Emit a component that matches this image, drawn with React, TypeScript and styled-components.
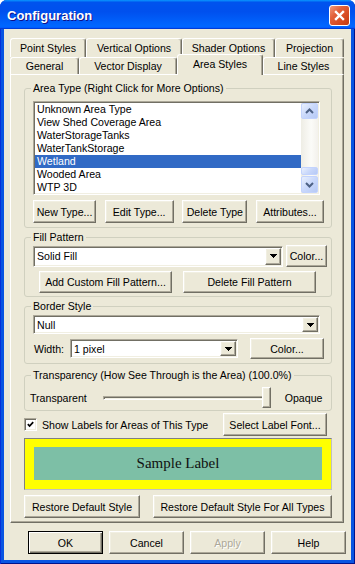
import React from "react";
import styled, { createGlobalStyle, css } from "styled-components";

const GlobalStyle = createGlobalStyle`
  html, body { margin: 0; padding: 0; background: #fff; }
  body {
    font-family: "Liberation Sans", Arial, sans-serif;
    font-size: 10.6px;
    color: #000;
  }
  * { box-sizing: border-box; }
`;

const FACE = "#ECE9D8";

const raised = css`
  border: 1px solid;
  border-color: #fff #716f64 #716f64 #fff;
  box-shadow: inset -1px -1px #aca899, inset 1px 1px #f1efe2;
`;

const sunken = css`
  border: 1px solid;
  border-color: #aca899 #fff #fff #aca899;
  box-shadow: inset 1px 1px #716f64, inset -1px -1px #f1efe2;
`;

const Window = styled.div`
  width: 355px;
  height: 564px;
  display: flex;
  flex-direction: column;
  background: #0a55e2;
  border-radius: 7px 7px 0 0;
  overflow: hidden;
  box-shadow: inset 1px 0 #0831d9, inset -1px -1px #00138c;
`;

const TitleBar = styled.div`
  height: 29px;
  flex-shrink: 0;
  display: flex;
  align-items: center;
  justify-content: space-between;
  padding: 2px 5px 0 7px;
  background: linear-gradient(180deg, #0997ff, #0053ee 8%, #0050ee 40%, #06f 88%, #06f 93%, #005bff 95%, #003dd7 96%, #003dd7);
`;

const Title = styled.span`
  color: #fff;
  font-weight: bold;
  font-size: 13px;
  text-shadow: 1px 1px #0f1089;
`;

const CloseButton = styled.div`
  width: 21px;
  height: 21px;
  border: 1px solid #fff;
  border-radius: 3px;
  background: linear-gradient(135deg, #f09a7c 0%, #e2603a 35%, #d64a20 70%, #c23c12 100%);
  display: flex;
  align-items: center;
  justify-content: center;
`;

const Client = styled.div`
  flex: 1;
  margin: 0 4px 4px;
  background: ${FACE};
  padding: 9px 7px 6px 6px;
  display: flex;
  flex-direction: column;
`;

const TabRow = styled.div<{ $h: number }>`
  display: flex;
  height: ${(p) => p.$h}px;
  flex-shrink: 0;
`;

const Tab = styled.div<{ $w: number; $active?: boolean }>`
  width: ${(p) => p.$w}px;
  flex-shrink: 0;
  display: flex;
  align-items: center;
  justify-content: center;
  white-space: nowrap;
  background: ${FACE};
  border: 1px solid;
  border-bottom: none;
  border-color: #fff #716f64 transparent #fff;
  box-shadow: inset -1px 0 #aca899;
  border-radius: 3px 3px 0 0;
  ${(p) =>
    p.$active &&
    css`
      position: relative;
      z-index: 2;
      margin-top: -3px;
      height: 21px;
      padding-bottom: 3px;
    `}
`;

const Panel = styled.div`
  height: 449px;
  flex-shrink: 0;
  border: 1px solid;
  border-color: #fff #716f64 #716f64 #fff;
  box-shadow: inset -1px -1px #aca899;
  padding: 7px 11px 0 13px;
  display: flex;
  flex-direction: column;
`;

const Group = styled.fieldset<{ $mt?: number; $pt: number; $pb: number }>`
  margin: ${(p) => p.$mt ?? 0}px 0 0;
  padding: ${(p) => p.$pt}px 4px ${(p) => p.$pb}px 8px;
  border: 1px solid #d0d0bf;
  border-radius: 3px;
  min-width: 0;
`;

const Legend = styled.legend`
  padding: 0 2px;
  margin-left: -2px;
  line-height: 13px;
`;

const ListBox = styled.div`
  width: 287px;
  height: 94px;
  display: flex;
  background: #fff;
  padding: 1px;
  ${sunken}
`;

const Items = styled.div`
  flex: 1;
  display: flex;
  flex-direction: column;
`;

const Item = styled.div<{ $selected?: boolean }>`
  height: 13px;
  line-height: 13px;
  padding-left: 2px;
  white-space: nowrap;
  background: ${(p) => (p.$selected ? "#316ac5" : "transparent")};
  color: ${(p) => (p.$selected ? "#fff" : "#000")};
`;

const ScrollBar = styled.div`
  width: 17px;
  display: flex;
  flex-direction: column;
  background: linear-gradient(90deg, #eeede5, #fbfbf8 60%, #f3f1ec);
`;

const ScrollBtn = styled.div<{ $h: number }>`
  height: ${(p) => p.$h}px;
  flex-shrink: 0;
  border: 1px solid #c3d3fd;
  border-radius: 2px;
  background: linear-gradient(135deg, #e9f0fd 0%, #c9d8fb 50%, #b6c9f5 100%);
  display: flex;
  align-items: center;
  justify-content: center;
`;

const Track = styled.div`
  flex: 1;
  display: flex;
  flex-direction: column;
`;

const Thumb = styled(ScrollBtn)`
  margin-top: auto;
  margin-bottom: 1px;
`;

const Row = styled.div<{ $mt?: number; $gap?: number; $w?: number; $spread?: boolean; $pl?: number }>`
  display: flex;
  align-items: center;
  margin-top: ${(p) => p.$mt ?? 0}px;
  gap: ${(p) => p.$gap ?? 0}px;
  width: ${(p) => (p.$w ? `${p.$w}px` : "auto")};
  justify-content: ${(p) => (p.$spread ? "space-between" : "flex-start")};
  padding-left: ${(p) => p.$pl ?? 0}px;
  flex-shrink: 0;
`;

const Button = styled.button<{ $w: number; $h?: number; $default?: boolean; $ml?: string }>`
  width: ${(p) => p.$w}px;
  height: ${(p) => p.$h ?? 23}px;
  flex-shrink: 0;
  margin: 0 0 0 ${(p) => p.$ml ?? "0"};
  padding: 0;
  font: inherit;
  color: #000;
  white-space: nowrap;
  background: ${FACE};
  ${raised}
  ${(p) =>
    p.$default &&
    css`
      border: 1px solid #000;
      box-shadow: inset 1px 1px #fff, inset -1px -1px #716f64, inset -2px -2px #aca899;
    `}
  &:disabled {
    color: #aca899;
    text-shadow: 1px 1px #fff;
  }
`;

const Combo = styled.div<{ $w: number; $h: number }>`
  width: ${(p) => p.$w}px;
  height: ${(p) => p.$h}px;
  flex-shrink: 0;
  display: flex;
  align-items: center;
  background: #fff;
  padding: 1px;
  ${sunken}
`;

const ComboText = styled.span`
  flex: 1;
  padding-left: 2px;
`;

const DropButton = styled.div`
  width: 16px;
  align-self: stretch;
  background: ${FACE};
  display: flex;
  align-items: center;
  justify-content: center;
  ${raised}
`;

const FieldLabel = styled.span<{ $w?: number; $ml?: number }>`
  width: ${(p) => (p.$w ? `${p.$w}px` : "auto")};
  margin-left: ${(p) => p.$ml ?? 0}px;
  flex-shrink: 0;
  white-space: nowrap;
`;

const SliderRow = styled.div`
  display: flex;
  align-items: center;
  height: 22px;
  margin-left: -3px;
`;

const Slider = styled.div`
  position: relative;
  width: 168px;
  height: 22px;
  margin: 0 14px 0 16px;
  display: flex;
  align-items: center;
  flex-shrink: 0;
`;

const Channel = styled.div`
  width: 100%;
  height: 4px;
  ${sunken}
  background: ${FACE};
`;

const SliderThumb = styled.div`
  position: absolute;
  top: 0;
  width: 9px;
  height: 21px;
  background: ${FACE};
  ${raised}
`;

const CheckRow = styled.div`
  display: flex;
  align-items: center;
  height: 23px;
  margin-top: 2px;
  padding-right: 5px;
  flex-shrink: 0;
`;

const CheckBox = styled.div`
  width: 13px;
  height: 13px;
  background: #fff;
  ${sunken}
  display: flex;
  align-items: center;
  justify-content: center;
  flex-shrink: 0;
`;

const Preview = styled.div`
  height: 52px;
  margin-top: 2px;
  flex-shrink: 0;
  background: #ffff00;
  border: 1px solid;
  border-color: #808080 #c0c0c0 #c0c0c0 #808080;
  padding: 8px 9px 9px;
  display: flex;
`;

const PreviewLabel = styled.div`
  flex: 1;
  background: #7dbfa6;
  display: flex;
  align-items: center;
  justify-content: center;
  font-family: "Liberation Serif", "Times New Roman", serif;
  font-size: 15px;
  color: #111;
`;

const DialogButtons = styled.div`
  display: flex;
  justify-content: flex-end;
  gap: 6px;
  margin: 8px -2px 0 0;
  flex-shrink: 0;
`;

const Arrow = () => (
  <svg width="7" height="4" viewBox="0 0 7 4" shapeRendering="crispEdges">
    <path d="M0 0h7v1H0zM1 1h5v1H1zM2 2h3v1H2zM3 3h1v1H3z" fill="#000" />
  </svg>
);

const Chevron = ({ up }: { up?: boolean }) => (
  <svg width="9" height="6" viewBox="0 0 9 6">
    <path d={up ? "M1 5 L4.5 1.5 L8 5" : "M1 1 L4.5 4.5 L8 1"} fill="none" stroke="#4d6185" strokeWidth="2" />
  </svg>
);

const tabsBack = [
  { label: "Point Styles", w: 76 },
  { label: "Vertical Options", w: 96 },
  { label: "Shader Options", w: 93 },
  { label: "Projection", w: 69 },
];

const tabsFront = [
  { label: "General", w: 69 },
  { label: "Vector Display", w: 98 },
  { label: "Area Styles", w: 86, active: true },
  { label: "Line Styles", w: 81 },
];

const areaTypes = [
  "Unknown Area Type",
  "View Shed Coverage Area",
  "WaterStorageTanks",
  "WaterTankStorage",
  "Wetland",
  "Wooded Area",
  "WTP 3D",
];

const transparency = 1;

const App: React.FC = () => {
  return (
    <>
      <GlobalStyle />
      <Window>
        <TitleBar>
          <Title>Configuration</Title>
          <CloseButton>
            <svg width="13" height="13" viewBox="0 0 13 13">
              <path d="M3 3 L10 10 M10 3 L3 10" stroke="#fff" strokeWidth="2.4" strokeLinecap="square" />
            </svg>
          </CloseButton>
        </TitleBar>
        <Client>
          <TabRow $h={19}>
            {tabsBack.map((t) => (
              <Tab key={t.label} $w={t.w}>{t.label}</Tab>
            ))}
          </TabRow>
          <TabRow $h={17}>
            {tabsFront.map((t) => (
              <Tab key={t.label} $w={t.w} $active={t.active}>{t.label}</Tab>
            ))}
          </TabRow>
          <Panel>
            <Group $pt={6} $pb={4}>
              <Legend>Area Type (Right Click for More Options)</Legend>
              <ListBox>
                <Items>
                  {areaTypes.map((a) => (
                    <Item key={a} $selected={a === "Wetland"}>{a}</Item>
                  ))}
                </Items>
                <ScrollBar>
                  <ScrollBtn $h={16}><Chevron up /></ScrollBtn>
                  <Track>
                    <Thumb $h={8} />
                  </Track>
                  <ScrollBtn $h={17}><Chevron /></ScrollBtn>
                </ScrollBar>
              </ListBox>
              <Row $mt={5} $w={291} $spread>
                <Button $w={63}>New Type...</Button>
                <Button $w={69}>Edit Type...</Button>
                <Button $w={65}>Delete Type</Button>
                <Button $w={68}>Attributes...</Button>
              </Row>
            </Group>

            <Group $mt={3} $pt={1} $pb={3}>
              <Legend>Fill Pattern</Legend>
              <Row $gap={3}>
                <Combo $w={250} $h={21}>
                  <ComboText>Solid Fill</ComboText>
                  <DropButton><Arrow /></DropButton>
                </Combo>
                <Button $w={41} $h={22}>Color...</Button>
              </Row>
              <Row $mt={4} $gap={11} $pl={6}>
                <Button $w={133} $h={22}>Add Custom Fill Pattern...</Button>
                <Button $w={133} $h={22}>Delete Fill Pattern</Button>
              </Row>
            </Group>

            <Group $mt={3} $pt={2} $pb={4}>
              <Legend>Border Style</Legend>
              <Combo $w={287} $h={19}>
                <ComboText>Null</ComboText>
                <DropButton><Arrow /></DropButton>
              </Combo>
              <Row $mt={4}>
                <FieldLabel $w={36} $ml={1}>Width:</FieldLabel>
                <Combo $w={168} $h={19}>
                  <ComboText>1 pixel</ComboText>
                  <DropButton><Arrow /></DropButton>
                </Combo>
                <Button $w={74} $h={21} $ml="12px">Color...</Button>
              </Row>
            </Group>

            <Group $mt={5} $pt={5} $pb={1}>
              <Legend>Transparency (How See Through is the Area) (100.0%)</Legend>
              <SliderRow>
                <FieldLabel>Transparent</FieldLabel>
                <Slider>
                  <Channel />
                  <SliderThumb style={{ left: `${transparency * (168 - 9)}px` }} />
                </Slider>
                <FieldLabel>Opaque</FieldLabel>
              </SliderRow>
            </Group>

            <CheckRow>
              <CheckBox>
                <svg width="7" height="7" viewBox="0 0 7 7">
                  <path d="M0.8 3.2 L2.6 5 L6.2 1.2" fill="none" stroke="#000" strokeWidth="1.7" />
                </svg>
              </CheckBox>
              <FieldLabel $ml={5}>Show Labels for Areas of This Type</FieldLabel>
              <Button $w={104} $ml="auto">Select Label Font...</Button>
            </CheckRow>

            <Preview>
              <PreviewLabel>Sample Label</PreviewLabel>
            </Preview>

            <Row $mt={5} $spread>
              <Button $w={116}>Restore Default Style</Button>
              <Button $w={179}>Restore Default Style For All Types</Button>
            </Row>
          </Panel>
          <DialogButtons>
            <Button $w={75} $default>OK</Button>
            <Button $w={75}>Cancel</Button>
            <Button $w={75} disabled>Apply</Button>
            <Button $w={75}>Help</Button>
          </DialogButtons>
        </Client>
      </Window>
    </>
  );
};

export default App;
